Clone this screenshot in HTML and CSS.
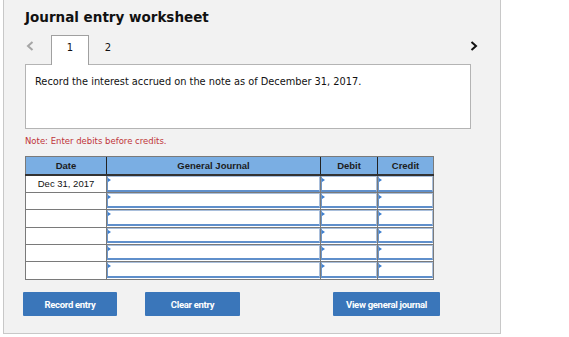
FILE: index.html
```html
<!DOCTYPE html>
<html>
<head>
<meta charset="utf-8">
<link rel="stylesheet" href="styles.css">
</head>
<body>
<div class="panel">
  <h1 class="title">Journal entry worksheet</h1>
  <div class="tabs">
    <span class="nav prev"><svg width="8" height="10" viewBox="0 0 8 10"><path d="M6.5 1 L2 5 L6.5 9" fill="none" stroke="#a6a6a6" stroke-width="2"/></svg></span>
    <span class="tab active">1</span>
    <span class="tab">2</span>
    <span class="nav next"><svg width="8" height="10" viewBox="0 0 8 10"><path d="M1.5 1 L6 5 L1.5 9" fill="none" stroke="#111" stroke-width="2"/></svg></span>
  </div>
  <div class="prompt">Record the interest accrued on the note as of December 31, 2017.</div>
  <p class="note">Note: Enter debits before credits.</p>
  <table class="grid">
    <thead>
      <tr><th class="c-date">Date</th><th class="c-gj">General Journal</th><th class="c-dr">Debit</th><th class="c-cr">Credit</th></tr>
    </thead>
    <tbody>
      <tr class="r18"><td class="date">Dec 31, 2017</td><td><div class="inp"></div></td><td><div class="inp"></div></td><td><div class="inp"></div></td></tr>
      <tr class="r17"><td class="date"></td><td><div class="inp"></div></td><td><div class="inp"></div></td><td><div class="inp"></div></td></tr>
      <tr class="r18"><td class="date"></td><td><div class="inp"></div></td><td><div class="inp"></div></td><td><div class="inp"></div></td></tr>
      <tr class="r17"><td class="date"></td><td><div class="inp"></div></td><td><div class="inp"></div></td><td><div class="inp"></div></td></tr>
      <tr class="r17"><td class="date"></td><td><div class="inp"></div></td><td><div class="inp"></div></td><td><div class="inp"></div></td></tr>
      <tr class="r18"><td class="date"></td><td><div class="inp"></div></td><td><div class="inp"></div></td><td><div class="inp"></div></td></tr>
    </tbody>
  </table>
  <div class="actions">
    <button class="btn b-record">Record entry</button>
    <button class="btn b-clear">Clear entry</button>
    <button class="btn b-view">View general journal</button>
  </div>
</div>
</body>
</html>
```

FILE: styles.css
```css
* { box-sizing: border-box; }
html, body { margin: 0; padding: 0; background: #ffffff; }
body { font-family: "DejaVu Sans", Verdana, sans-serif; color: #111; }

.panel {
  margin-left: 3px;
  width: 498px;
  height: 334px;
  background: #f2f2f2;
  border: 1px solid #c8c8c8;
  border-top: none;
  padding: 9px 0 0 21px;
}

.title {
  margin: 0;
  font-size: 13.5px;
  line-height: 16px;
  font-weight: bold;
  color: #111;
}

.tabs {
  margin-top: 10px;
  height: 29px;
  display: flex;
  align-items: flex-start;
  width: 453px;
  position: relative;
  z-index: 1;
}
.nav { display: flex; height: 29px; padding-top: 6px; }
.prev { margin-left: 1px; width: 25px; }
.next { margin-left: auto; }
.tab {
  width: 38px;
  height: 30px;
  font-size: 10px;
  line-height: 24px;
  text-align: center;
  color: #111;
  border: 1px solid transparent;
  border-bottom: none;
}
.tab.active {
  background: #fff;
  border-color: #a0a0a0;
}

.prompt {
  width: 446px;
  height: 65px;
  background: #fff;
  border: 1px solid #b4b4b4;
  padding: 11px 0 0 9px;
  font-size: 9.8px;
  line-height: 12px;
  color: #111;
}

.note {
  margin: 6px 0 0 0;
  font-size: 8.5px;
  line-height: 12px;
  color: #c0353a;
}

.grid {
  margin-top: 9px;
  border-collapse: collapse;
  width: 408px;
  table-layout: fixed;
  font-family: "Liberation Sans", Arial, sans-serif;
  font-size: 9.5px;
  border: 1px solid #7a7a7a;
}
.grid th {
  height: 18px;
  padding: 0;
  background: #7aaee3;
  color: #1c1c1c;
  font-weight: bold;
  text-align: center;
  border-left: 1px solid #222;
  border-bottom: 2px solid #333;
  border-top: 1px solid #7a7a7a;
}
.grid th:first-child { border-left: 1px solid #7a7a7a; }
.c-date { width: 81px; }
.c-gj { width: 214px; }
.c-dr { width: 57px; }
.c-cr { width: 56px; }
.grid td {
  padding: 0;
  border: 1px solid #7a7a7a;
  background: #fff;
  vertical-align: top;
}
.grid td.date {
  text-align: center;
  color: #111;
  vertical-align: middle;
  line-height: 12px;
}
.r18 td { height: 18px; }
.r17 td { height: 17px; }
.inp {
  position: relative;
  height: 100%;
  min-height: 15px;
  border: 1px solid #a9bfdc;
  border-left: 1px solid #6d96c9;
  border-bottom: 2px solid #5f8fcb;
  background: #fff;
}
.r18 .inp { height: 16px; }
.r17 .inp { height: 15px; }
.inp::before {
  content: "";
  position: absolute;
  left: 0;
  top: 1px;
  width: 0;
  height: 0;
  border-top: 2px solid transparent;
  border-bottom: 2px solid transparent;
  border-left: 3px solid #3d7fd0;
}

.actions {
  margin-top: 12px;
  margin-left: -2px;
  display: flex;
}
.btn {
  height: 24px;
  border: none;
  border-radius: 1px;
  background: #3a76ba;
  color: #fff;
  font-family: Roboto, "Liberation Sans", sans-serif;
  font-weight: bold;
  font-size: 9.5px;
  letter-spacing: -0.3px;
  padding: 0;
}
.b-record { width: 94px; }
.b-clear { width: 95px; margin-left: 28px; }
.b-view { width: 107px; margin-left: 93px; }
```
